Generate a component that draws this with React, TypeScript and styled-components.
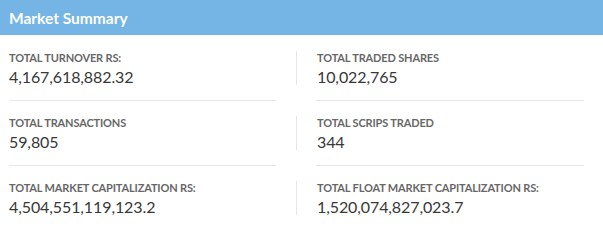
import styled, { createGlobalStyle } from 'styled-components';

const GlobalStyle = createGlobalStyle`
  html, body {
    margin: 0;
    padding: 0;
    background: #ffffff;
  }
  body {
    font-family: Lato, 'Open Sans', sans-serif;
  }
`;

const Panel = styled.section`
  width: 603px;
  background: #ffffff;
`;

const Header = styled.header`
  height: 35px;
  display: flex;
  align-items: center;
  padding: 0 9px;
  background: #74b5e6;
  box-sizing: border-box;
`;

const Title = styled.h2`
  margin: 0;
  font-size: 15.5px;
  font-weight: 700;
  color: #ffffff;
`;

const Body = styled.div`
  display: grid;
  grid-template-columns: 287px 1fr;
  padding: 16px 19px 0 9px;
`;

const Cell = styled.div<{ $right?: boolean }>`
  padding: ${(p) => (p.$right ? '0 0 0 20px' : '0 20px 0 0')};
`;

const Stat = styled.div<{ $right?: boolean }>`
  height: 34px;
  display: flex;
  flex-direction: column;
  ${(p) =>
    p.$right &&
    `
    margin-left: -20px;
    padding-left: 20px;
    border-left: 1px solid #e6e6e6;
  `}
`;

const Label = styled.span`
  font-size: 11px;
  line-height: 14px;
  font-weight: 700;
  letter-spacing: -0.15px;
  color: #676767;
  text-transform: uppercase;
`;

const Value = styled.span`
  font-size: 16px;
  line-height: 20px;
  color: #383838;
  margin-top: 2px;
  letter-spacing: -0.1px;
`;

const Divider = styled.hr<{ $hidden?: boolean }>`
  margin: 15px 0;
  border: 0;
  height: 1px;
  background: ${(p) => (p.$hidden ? 'transparent' : '#e6e6e6')};
`;

const stats = [
  ['Total Turnover Rs:', '4,167,618,882.32', 'Total Traded Shares', '10,022,765'],
  ['Total Transactions', '59,805', 'Total Scrips Traded', '344'],
  [
    'Total Market Capitalization Rs:',
    '4,504,551,119,123.2',
    'Total Float Market Capitalization Rs:',
    '1,520,074,827,023.7',
  ],
];

export default function App() {
  return (
    <>
      <GlobalStyle />
      <Panel>
        <Header>
          <Title>Market Summary</Title>
        </Header>
        <Body>
          {stats.map(([l1, v1, l2, v2], i) => {
            const last = i === stats.length - 1;
            return [
              <Cell key={`l${i}`}>
                <Stat>
                  <Label>{l1}</Label>
                  <Value>{v1}</Value>
                </Stat>
                <Divider $hidden={last} />
              </Cell>,
              <Cell key={`r${i}`} $right>
                <Stat $right>
                  <Label>{l2}</Label>
                  <Value>{v2}</Value>
                </Stat>
                <Divider $hidden={last} />
              </Cell>,
            ];
          })}
        </Body>
      </Panel>
    </>
  );
}
